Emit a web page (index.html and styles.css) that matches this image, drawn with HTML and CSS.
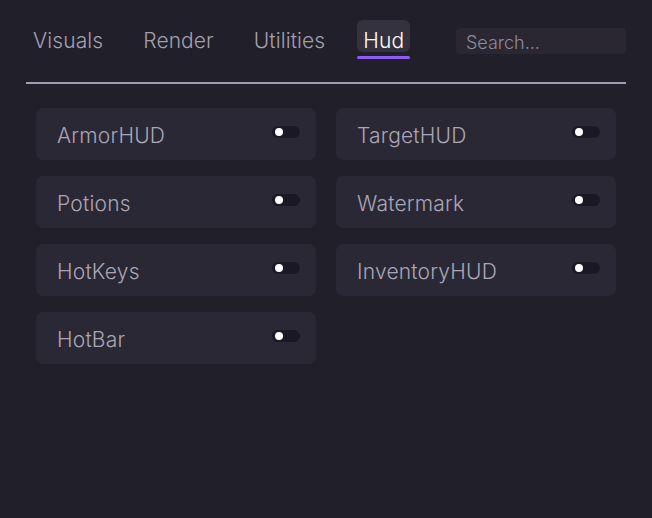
FILE: index.html
```html
<!DOCTYPE html>
<html>
<head>
<meta charset="utf-8">
<link rel="stylesheet" href="styles.css">
</head>
<body>
<div class="panel">
  <div class="topbar">
    <nav class="tabs">
      <div class="tab">Visuals</div>
      <div class="tab">Render</div>
      <div class="tab">Utilities</div>
      <div class="tab active">Hud</div>
    </nav>
    <div class="search">Search...</div>
  </div>
  <div class="divider"></div>
  <div class="grid">
    <div class="card"><span class="label">ArmorHUD</span><span class="toggle"><span class="knob"></span></span></div>
    <div class="card"><span class="label">TargetHUD</span><span class="toggle"><span class="knob"></span></span></div>
    <div class="card"><span class="label">Potions</span><span class="toggle"><span class="knob"></span></span></div>
    <div class="card"><span class="label">Watermark</span><span class="toggle"><span class="knob"></span></span></div>
    <div class="card"><span class="label">HotKeys</span><span class="toggle"><span class="knob"></span></span></div>
    <div class="card"><span class="label">InventoryHUD</span><span class="toggle"><span class="knob"></span></span></div>
    <div class="card"><span class="label">HotBar</span><span class="toggle"><span class="knob"></span></span></div>
  </div>
</div>
</body>
</html>
```
FILE: styles.css
```css
html, body {
  margin: 0;
  padding: 0;
  background: #211f2a;
  width: 652px;
  height: 518px;
  overflow: hidden;
  font-family: Inter, "Noto Sans", sans-serif;
  font-weight: 300;
}
.panel {
  padding: 20px 26px 0 26px;
}
.topbar {
  display: flex;
  align-items: flex-start;
  padding-left: 2px;
  height: 40px;
}
.tabs {
  display: flex;
  gap: 30px;
}
.tab {
  position: relative;
  height: 32px;
  line-height: 41px;
  padding: 0 5px;
  font-size: 21px;
  letter-spacing: 0.1px;
  color: #a4a1af;
  border-radius: 6px;
}
.tab.active {
  margin-left: -3px;
  padding: 0 6px;
  background: #35323f;
  color: #ffffff;
}
.tab.active::after {
  content: "";
  position: absolute;
  left: 0;
  right: 0;
  bottom: -7px;
  height: 3px;
  border-radius: 2px;
  background: #8b5cf6;
}
.search {
  margin-left: auto;
  margin-top: 8px;
  width: 160px;
  height: 26px;
  line-height: 29px;
  padding-left: 10px;
  font-size: 18px;
  color: #8f8b9b;
  background: #2a2733;
  border-radius: 4px;
}
.divider {
  margin-top: 22px;
  height: 2px;
  background: #a29eb2;
}
.grid {
  display: grid;
  grid-template-columns: 280px 280px;
  column-gap: 20px;
  row-gap: 16px;
  padding: 24px 10px 0 10px;
}
.card {
  height: 52px;
  background: #2b2835;
  border-radius: 7px;
  display: flex;
  align-items: center;
  justify-content: space-between;
  padding: 0 16px 0 21px;
}
.label {
  font-size: 21px;
  line-height: 24px;
  margin-top: 3px;
  letter-spacing: 0.2px;
  color: #aaa6b6;
}
.toggle {
  width: 28px;
  height: 12px;
  border-radius: 6px;
  background: #1a1824;
  display: flex;
  align-items: center;
  padding-left: 3px;
  box-sizing: border-box;
  margin-top: -4px;
}
.knob {
  width: 8px;
  height: 8px;
  border-radius: 50%;
  background: #ffffff;
}
```
